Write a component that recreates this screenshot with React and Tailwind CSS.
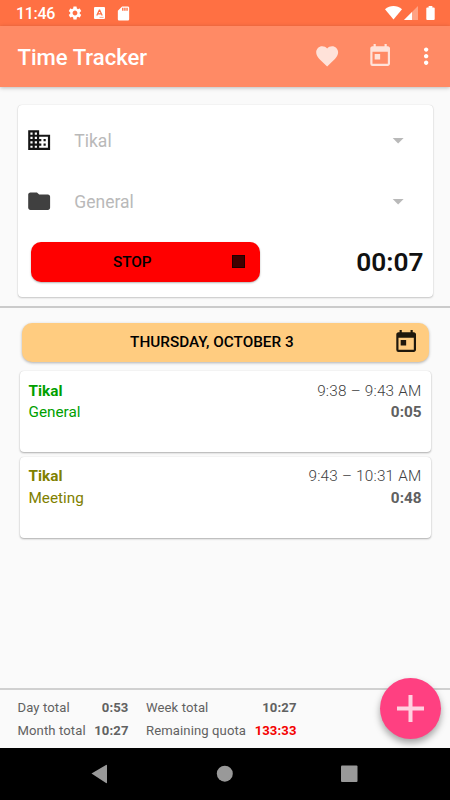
import { MdArrowDropDown, MdBusiness, MdFavorite, MdFolder, MdMoreVert, MdSdCard, MdSettings, MdToday } from 'react-icons/md'

const entries = [
  { id: 1, customer: 'Tikal', task: 'General', time: '9:38 – 9:43 AM', duration: '0:05', color: 'text-[#009f00]' },
  { id: 2, customer: 'Tikal', task: 'Meeting', time: '9:43 – 10:31 AM', duration: '0:48', color: 'text-[#808000]' },
]

function StatusBar() {
  return (
    <div className="flex h-[26px] shrink-0 items-center bg-[#ff7043] pl-4 pr-[15.5px] text-white">
      <span className="w-[50.5px] pt-[2px] text-[16px] font-medium tracking-[-0.3px]">11:46</span>
      <MdSettings className="size-[16px]" />
      <svg className="ml-[11px] h-3 w-[11px]" viewBox="0 0 11 12">
        <rect width="11" height="12" rx="1" fill="#fff" />
        <path d="M2.8 8.6 5.3 3h.4l2.5 5.6M3.8 6.8h3.4" fill="none" stroke="#ff7043" strokeWidth="1.2" />
        <path d="M5.5 10.4h4" stroke="#ff7043" strokeWidth=".6" />
      </svg>
      <MdSdCard className="ml-[10px] size-[17px]" />
      <svg className="ml-auto h-[14px] w-[17px]" viewBox="0 0 17 14">
        <path d="M0 3.3C5-1 12-1 17 3.3L8.5 13.5z" fill="#fff" />
      </svg>
      <svg className="ml-[2px] h-[14px] w-[14px]" viewBox="0 0 14 14">
        <path d="M14 0v14H0z" fill="#fff" opacity=".35" />
        <path d="M8 6v8H0z" fill="#fff" />
      </svg>
      <svg className="ml-[8px] h-[14px] w-[9px]" viewBox="0 0 9 15">
        <path d="M2.5 0h4v1.5H8q1 0 1 1V14q0 1-1 1H1q-1 0-1-1V2.5q0-1 1-1h1.5z" fill="#fff" />
      </svg>
    </div>
  )
}

function AppBar() {
  return (
    <header className="z-10 flex h-[61px] shrink-0 items-center bg-[#ff8a65] pl-[17.5px] pr-[11px] text-white shadow-[0_1px_4px_rgba(0,0,0,0.25)]">
      <h1 className="flex-1 pt-[3px] text-[22.1px] font-medium">Time Tracker</h1>
      <MdFavorite className="size-[26.3px] text-[#ffe2d9]" />
      <MdToday className="ml-[27px] size-[26.3px] text-[#ffe2d9]" />
      <MdMoreVert className="ml-[19px] size-[26.3px]" />
    </header>
  )
}

function Picker({ icon: Icon, iconClass, label }) {
  return (
    <div className="flex h-[61.3px] items-center pl-[8.5px] pr-[22px]">
      <Icon className={`size-[26.3px] ${iconClass}`} />
      <span className="ml-[22px] flex-1 pt-[2px] text-[17.5px] text-[#b9b9b9]">{label}</span>
      <MdArrowDropDown className="size-[26.3px] text-[#b9b9b9]" />
    </div>
  )
}

function TimerCard() {
  return (
    <section className="ml-[17.5px] mr-[17px] mt-[18px] h-[192px] rounded-[4px] bg-white pt-[4.5px] shadow-[0_1px_2px_rgba(0,0,0,0.2),0_0_1px_rgba(0,0,0,0.2)]">
      <Picker icon={MdBusiness} iconClass="text-[#151515]" label="Tikal" />
      <Picker icon={MdFolder} iconClass="text-[#404040]" label="General" />
      <div className="mt-[9px] flex items-center justify-between pl-[13px] pr-[9.5px]">
        <button className="flex h-[39.5px] w-[229.5px] items-center rounded-[10px] bg-[#ff0000] pr-[15px] shadow-[0_1px_2px_rgba(0,0,0,0.3)]">
          <span className="flex-1 pl-[2px] pt-px text-[15.3px] font-medium text-black">STOP</span>
          <span className="size-[13px] border border-[#200000] bg-[#400000]" />
        </button>
        <span className="pt-[2px] text-[26.3px] font-semibold text-[#111]">00:07</span>
      </div>
    </section>
  )
}

function EntryCard({ entry }) {
  return (
    <li className="flex h-[81px] justify-between rounded-[4px] bg-white px-[9px] pt-[9.5px] text-[15.3px] leading-[21.5px] shadow-[0_1px_2px_rgba(0,0,0,0.3),0_0_1px_rgba(0,0,0,0.15)]">
      <div className={entry.color}>
        <p className="font-bold">{entry.customer}</p>
        <p>{entry.task}</p>
      </div>
      <div className="text-right text-[#606060]">
        <p className="font-light tracking-[0.22px] text-[#404040]">{entry.time}</p>
        <p className="font-bold">{entry.duration}</p>
      </div>
    </li>
  )
}

function Totals() {
  return (
    <footer className="relative h-[60px] shrink-0 border-t-2 border-[#d0d0d0] pl-[17.5px] pt-[5.5px]">
      <div className="grid grid-cols-[68px_43px_100px_68px] text-[13.1px] leading-[23px] tracking-[0.1px] whitespace-nowrap text-[#616161]">
        <span>Day total</span>
        <span className="text-right font-bold">0:53</span>
        <span className="pl-[17.5px]">Week total</span>
        <span className="text-right font-bold">10:27</span>
        <span>Month total</span>
        <span className="text-right font-bold">10:27</span>
        <span className="pl-[17.5px]">Remaining quota</span>
        <span className="text-right font-bold text-[#f40000]">133:33</span>
      </div>
      <button aria-label="Add entry" className="absolute right-[9px] top-[-12.5px] grid size-[61.3px] place-items-center rounded-full bg-[#ff4081] shadow-[0_4px_7px_rgba(0,0,0,0.35)]">
        <svg className="size-[27px]" viewBox="0 0 27 27">
          <path d="M13.5 0v27M0 13.5h27" stroke="#ffd1e0" strokeWidth="4" />
        </svg>
      </button>
    </footer>
  )
}

function NavBar() {
  return (
    <nav className="h-[52px] shrink-0 bg-black">
      <svg className="h-full w-full" viewBox="0 0 450 52" fill="#999">
        <path d="M91.5 25.5 106 17q1-.5 1 .5v17q0 1-1 .5z" />
        <circle cx="224.8" cy="25.7" r="8" />
        <rect x="341" y="17.5" width="16.5" height="16.5" rx="1" />
      </svg>
    </nav>
  )
}

export default function App() {
  return (
    <div className="flex h-[800px] w-[450px] flex-col overflow-hidden bg-[#fafafa] font-[Roboto,sans-serif]">
      <StatusBar />
      <AppBar />
      <TimerCard />
      <main className="mt-[9px] flex-1 border-t-2 border-[#cbcbcb] px-[19.5px] pt-[14.5px]">
        <button className="ml-[2px] flex h-[39.5px] w-[407px] items-center rounded-[10px] bg-[#ffcc80] pr-[9px] shadow-[0_1px_3px_rgba(0,0,0,0.3)]">
          <span className="flex-1 pl-[9px] pt-px text-[15.3px] font-medium text-black">THURSDAY, OCTOBER 3</span>
          <MdToday className="size-[26.3px] text-[#1f180c]" />
        </button>
        <ul className="mt-[9px] flex flex-col gap-[4.5px]">
          {entries.map((entry) => (
            <EntryCard key={entry.id} entry={entry} />
          ))}
        </ul>
      </main>
      <Totals />
      <NavBar />
    </div>
  )
}
